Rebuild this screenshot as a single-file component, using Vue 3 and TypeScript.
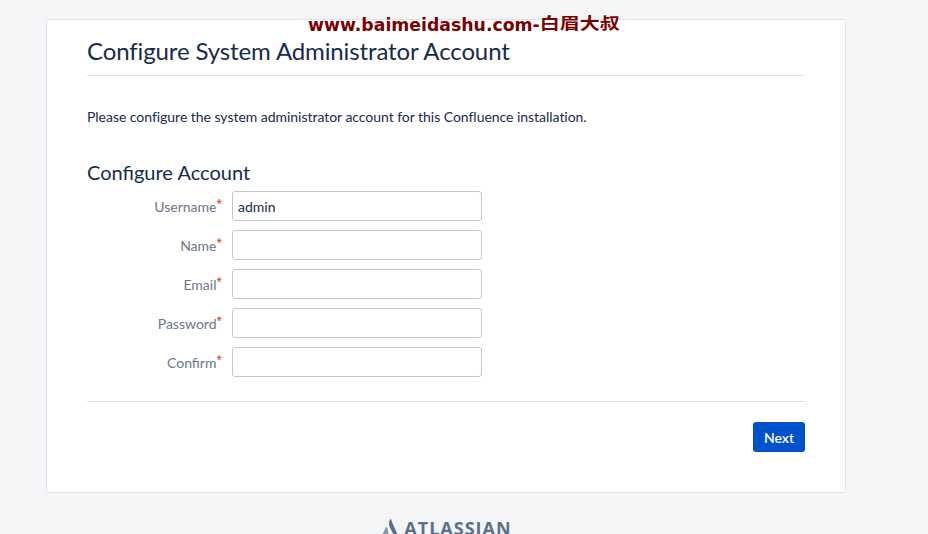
<script setup lang="ts">
const fields = [
  { label: 'Username', value: 'admin' },
  { label: 'Name', value: '' },
  { label: 'Email', value: '' },
  { label: 'Password', value: '' },
  { label: 'Confirm', value: '' },
]
</script>

<template>
  <div class="page">
    <div class="watermark">www.baimeidashu.com-<span class="cjk">白眉大叔</span></div>
    <main class="card">
      <h1 class="title">Configure System Administrator Account</h1>
      <p class="intro">Please configure the system administrator account for this Confluence installation.</p>
      <h2 class="subtitle">Configure Account</h2>
      <form class="form" @submit.prevent>
        <div v-for="f in fields" :key="f.label" class="row">
          <label class="label">{{ f.label }}<span class="req">*</span></label>
          <input class="input" type="text" :value="f.value" />
        </div>
        <div class="actions">
          <button class="next" type="submit">Next</button>
        </div>
      </form>
    </main>
    <footer class="footer">
      <svg class="logo" width="16" height="20" viewBox="0 0 16 20" aria-hidden="true">
        <path d="M8.3 0 C6.6 2.6 6.5 5.8 8 8.8 L12 16.6 H16 L8.9 0.3 C8.7 -0.1 8.5 -0.1 8.3 0 Z" fill="#5b6f8c" />
        <path d="M4.7 8.2 C4.4 7.9 4.1 7.9 3.9 8.3 L0 16.6 H5.6 C6.8 14 6.2 10 4.7 8.2 Z" fill="#8493a8" />
      </svg>
      <span class="brand">ATLASSIAN</span>
    </footer>
  </div>
</template>

<style>
html, body { margin: 0; background: #f4f5f7; overflow: hidden; }
</style>

<style scoped>
.page {
  position: relative;
  width: 928px;
  height: 534px;
  overflow: hidden;
  background: #f4f5f7;
  font-family: Lato, "Noto Sans", sans-serif;
  color: #172b4d;
  padding-top: 19px;
  box-sizing: border-box;
}
.watermark {
  position: absolute;
  left: 308px;
  top: 10px;
  font-family: "DejaVu Sans", sans-serif;
  font-weight: 700;
  font-size: 17.3px;
  line-height: 26px;
  color: #7b0000;
  white-space: nowrap;
}
.cjk {
  display: inline-block;
  font-family: "Noto Sans CJK SC", sans-serif;
  font-size: 20px;
  transform: scaleY(0.78);
}
.card {
  width: 800px;
  height: 474px;
  margin-left: 46px;
  box-sizing: border-box;
  background: #fff;
  border: 1px solid #dfe1e6;
  border-radius: 3px;
  padding: 0 40px;
}
.title {
  margin: 0;
  height: 56px;
  box-sizing: border-box;
  border-bottom: 1px solid #dfe1e6;
  font-size: 24px;
  font-weight: 400;
  line-height: 32px;
  padding-top: 15px;
  letter-spacing: -0.12px;
}
.intro {
  margin: 31px 0 0;
  font-size: 14px;
  line-height: 20px;
  letter-spacing: -0.035px;
}
.subtitle {
  margin: 33px 0 0;
  font-size: 20px;
  font-weight: 400;
  line-height: 24px;
}
.form { margin-top: 7px; }
.row {
  display: flex;
  align-items: center;
  height: 30px;
  margin-bottom: 9px;
}
.label {
  width: 135px;
  text-align: right;
  font-size: 14px;
  color: #6b778c;
  padding-right: 10px;
  flex: none;
}
.req {
  color: #de350b;
  font-family: "Noto Sans", sans-serif;
  font-size: 10px;
  position: relative;
  top: -5px;
}
.input {
  width: 250px;
  height: 30px;
  box-sizing: border-box;
  border: 1px solid #c1c7d0;
  border-radius: 3.01px;
  padding: 0 5px;
  font: inherit;
  font-size: 14px;
  color: #172b4d;
  background: #fff;
  outline: none;
}
.actions {
  margin-top: 24px;
  border-top: 1px solid #dfe1e6;
  padding-top: 20px;
  display: flex;
  justify-content: flex-end;
}
.next {
  width: 52px;
  height: 30px;
  border: 0;
  border-radius: 3px;
  background: #0052cc;
  color: #fff;
  font: inherit;
  font-size: 14px;
  font-weight: 600;
  padding: 0;
}
.footer {
  display: flex;
  justify-content: center;
  align-items: flex-start;
  gap: 6px;
  width: 802px;
  margin: 23px 0 0 46px;
  height: 18px;
}
.logo { flex: none; margin-top: 3px; }
.brand {
  font-family: "Open Sans", "Noto Sans", sans-serif;
  font-weight: 700;
  font-size: 18px;
  line-height: 24px;
  letter-spacing: 1px;
  color: #5b6f8c;
}
</style>
